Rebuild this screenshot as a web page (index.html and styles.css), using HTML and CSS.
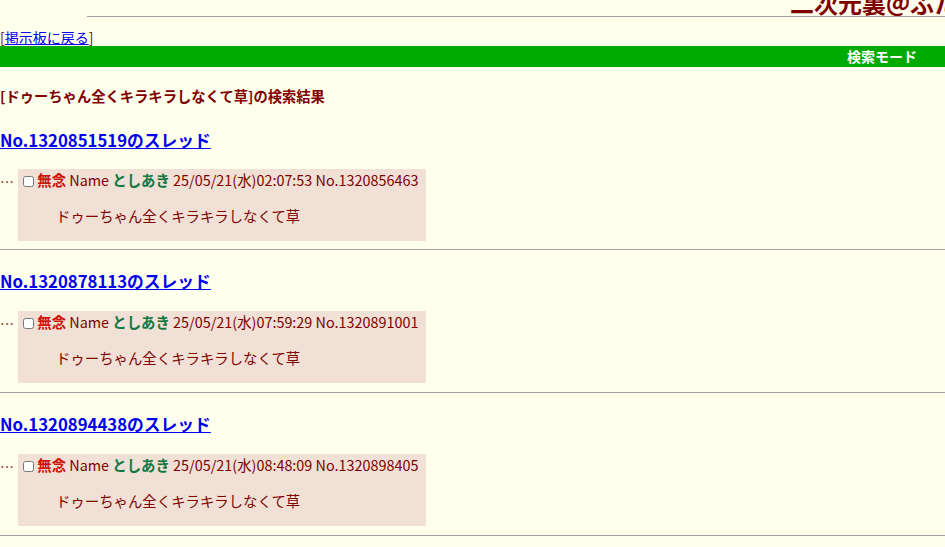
FILE: index.html
```html
<!DOCTYPE html>
<html lang="ja">
<head>
    <meta charset="UTF-8">
    <title>二次元裏＠ふたば - 検索モード</title>
    <link rel="stylesheet" href="styles.css">
</head>
<body>
    <div class="board-head">
        <span class="board-title">二次元裏＠ふたば</span>
    </div>
    <hr class="head-rule">

    <div class="return">[<a href="#">掲示板に戻る</a>]</div>
    <div class="mode-bar">検索モード</div>

    <h3 class="search-caption">[ドゥーちゃん全くキラキラしなくて草]の検索結果</h3>

    <div class="thread">
        <h2 class="thread-link"><a href="#">No.1320851519のスレッド</a></h2>
        <div class="reply">
            <span class="reply-mark">…</span>
            <div class="reply-body">
                <div class="reply-head">
                    <input type="checkbox">
                    <span class="subject">無念</span>
                    Name <span class="poster">としあき</span>
                    25/05/21(水)02:07:53 No.1320856463
                </div>
                <blockquote>ドゥーちゃん全くキラキラしなくて草</blockquote>
            </div>
        </div>
        <hr>
    </div>

    <div class="thread">
        <h2 class="thread-link"><a href="#">No.1320878113のスレッド</a></h2>
        <div class="reply">
            <span class="reply-mark">…</span>
            <div class="reply-body">
                <div class="reply-head">
                    <input type="checkbox">
                    <span class="subject">無念</span>
                    Name <span class="poster">としあき</span>
                    25/05/21(水)07:59:29 No.1320891001
                </div>
                <blockquote>ドゥーちゃん全くキラキラしなくて草</blockquote>
            </div>
        </div>
        <hr>
    </div>

    <div class="thread">
        <h2 class="thread-link"><a href="#">No.1320894438のスレッド</a></h2>
        <div class="reply">
            <span class="reply-mark">…</span>
            <div class="reply-body">
                <div class="reply-head">
                    <input type="checkbox">
                    <span class="subject">無念</span>
                    Name <span class="poster">としあき</span>
                    25/05/21(水)08:48:09 No.1320898405
                </div>
                <blockquote>ドゥーちゃん全くキラキラしなくて草</blockquote>
            </div>
        </div>
        <hr>
    </div>
</body>
</html>
```

FILE: styles.css
```css
body {
    margin: 0;
    background: #ffffee;
    color: #800000;
    font-family: "Noto Sans CJK JP", "Noto Sans", sans-serif;
    font-size: 14px;
}

a {
    color: #0000ee;
}

hr {
    border: none;
    border-top: 1px solid #a0a0a0;
    margin: 0;
}

.board-head {
    height: 16px;
    overflow: hidden;
    display: flex;
    justify-content: flex-end;
}

.board-title {
    font-size: 24px;
    font-weight: bold;
    line-height: 24px;
    margin-top: -9px;
    margin-right: -37px;
    white-space: nowrap;
}

.head-rule {
    margin-left: 87px;
}

.return {
    margin-top: 11px;
    font-size: 14px;
    line-height: 18px;
}

.mode-bar {
    background: #00aa00;
    color: #fff;
    font-weight: bold;
    text-align: right;
    padding-right: 28px;
    height: 21px;
    line-height: 21px;
}

.search-caption {
    font-size: 14.3px;
    margin: 20px 0 0;
    line-height: 18px;
}

.thread-link {
    font-size: 16.75px;
    margin: 23px 0 0;
    line-height: 24px;
}

.thread-link a {
    color: #0000ee;
}

.reply {
    display: flex;
    align-items: flex-start;
    margin-top: 17px;
}

.reply-mark {
    width: 18px;
    margin-top: 2px;
}

.reply-body {
    background: #f0e0d6;
    width: 408px;
    height: 72px;
    padding: 1px 5px 0;
    box-sizing: border-box;
    font-size: 14.4px;
}

.reply-head {
    line-height: 20px;
}

.reply-head input {
    width: 11px;
    height: 11px;
    margin: 0;
    vertical-align: -1px;
}

.subject {
    color: #cc1105;
    font-weight: bold;
}

.poster {
    color: #117743;
    font-weight: bold;
}

.reply blockquote {
    margin: 16px 0 0 33px;
    line-height: 20px;
}

.thread hr {
    margin-top: 8px;
}

.thread + .thread hr {
    margin-top: 9px;
}

.thread + .thread .thread-link {
    margin-top: 19px;
}

.thread + .thread .reply {
    margin-top: 18px;
}
```
